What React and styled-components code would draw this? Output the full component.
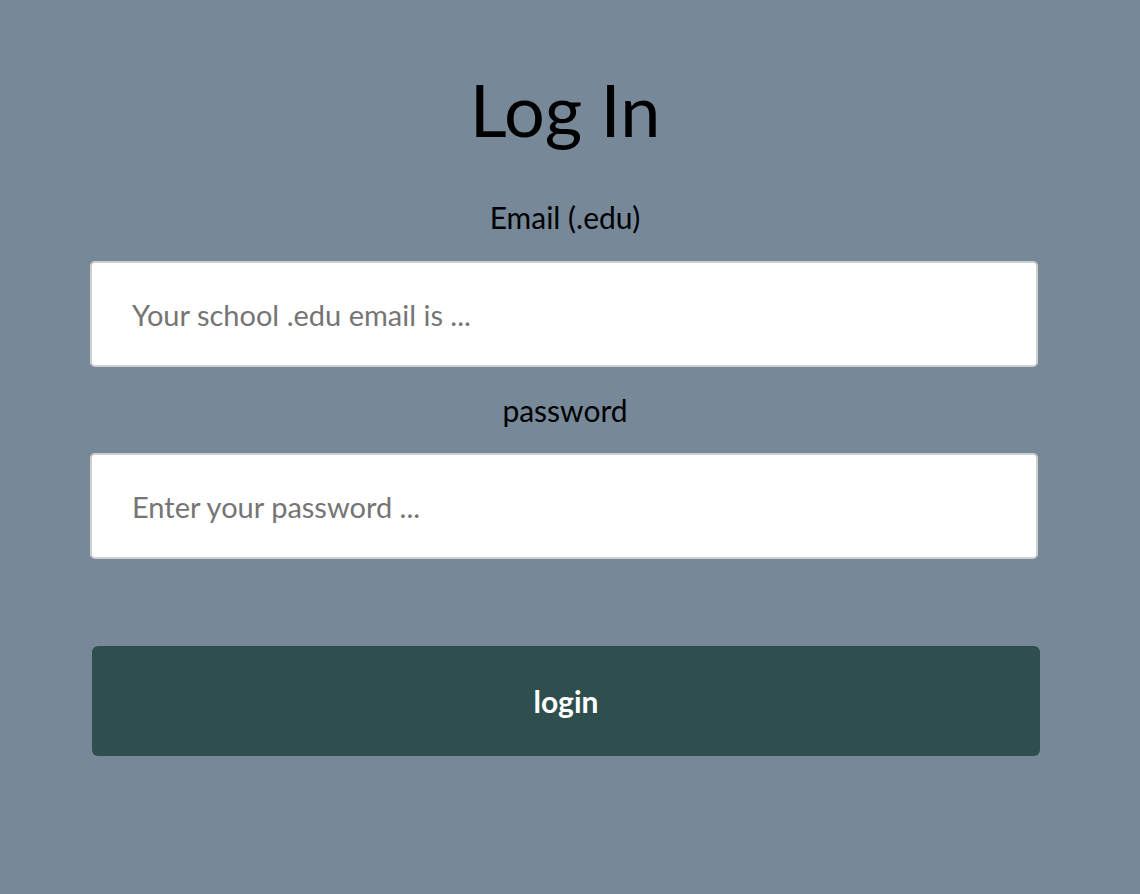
import React, { useState } from "react"
import styled, { createGlobalStyle } from "styled-components"

const GlobalStyle = createGlobalStyle`
    html, body {
        margin: 0;
        padding: 0;
        background-color: #778899;
        font-family: Lato, "Noto Sans", sans-serif;
    }
`

export default function App() {
    const [email, setEmail] = useState("")
    const [password, setPassword] = useState("")

    return (
        <Page>
            <GlobalStyle />
            <Form onSubmit={(ev) => ev.preventDefault()}>
                <Title>Log In</Title>
                <Label htmlFor="email" top={46} bottom={26}>
                    Email (.edu)
                </Label>
                <Input
                    id="email"
                    type="text"
                    placeholder="Your school .edu email is ..."
                    value={email}
                    onChange={(ev) => setEmail(ev.target.value)}
                />
                <Label htmlFor="password" top={25} bottom={25}>
                    password
                </Label>
                <Input
                    id="password"
                    type="password"
                    placeholder="Enter your password ..."
                    value={password}
                    onChange={(ev) => setPassword(ev.target.value)}
                />
                <LoginBtn type="submit">login</LoginBtn>
            </Form>
        </Page>
    )
}

const Page = styled.div`
    min-height: 894px;
    background-color: #778899;
    padding-top: 65px;
    box-sizing: border-box;
`

const Form = styled.form`
    width: 950px;
    margin-left: 90px;
    display: flex;
    flex-direction: column;
    align-items: center;
`

const Title = styled.h1`
    margin: 0;
    font-size: 72px;
    font-weight: 400;
    line-height: 88px;
    color: #000;
`

const Label = styled.label`
    display: block;
    margin: ${(p) => p.top}px 0 ${(p) => p.bottom}px 0;
    font-size: 30px;
    line-height: 36px;
    color: #000;
    text-align: center;
`

const Input = styled.input`
    display: block;
    box-sizing: border-box;
    width: 948px;
    align-self: flex-start;
    height: 106px;
    padding: 0 40px;
    border: 2px solid #cfcfcf;
    border-radius: 5px;
    background-color: #fff;
    font-family: Lato, "Noto Sans", sans-serif;
    font-size: 29px;
    color: #333;
    outline: none;
    &::placeholder {
        color: #757575;
    }
`

const LoginBtn = styled.button`
    box-sizing: border-box;
    width: 948px;
    height: 110px;
    margin: 87px 0 0 2px;
    align-self: flex-start;
    border: none;
    border-radius: 6px;
    background-color: #2f4f4f;
    color: #fff;
    font-family: Lato, "Noto Sans", sans-serif;
    font-size: 30px;
    font-weight: 700;
    cursor: pointer;
`
